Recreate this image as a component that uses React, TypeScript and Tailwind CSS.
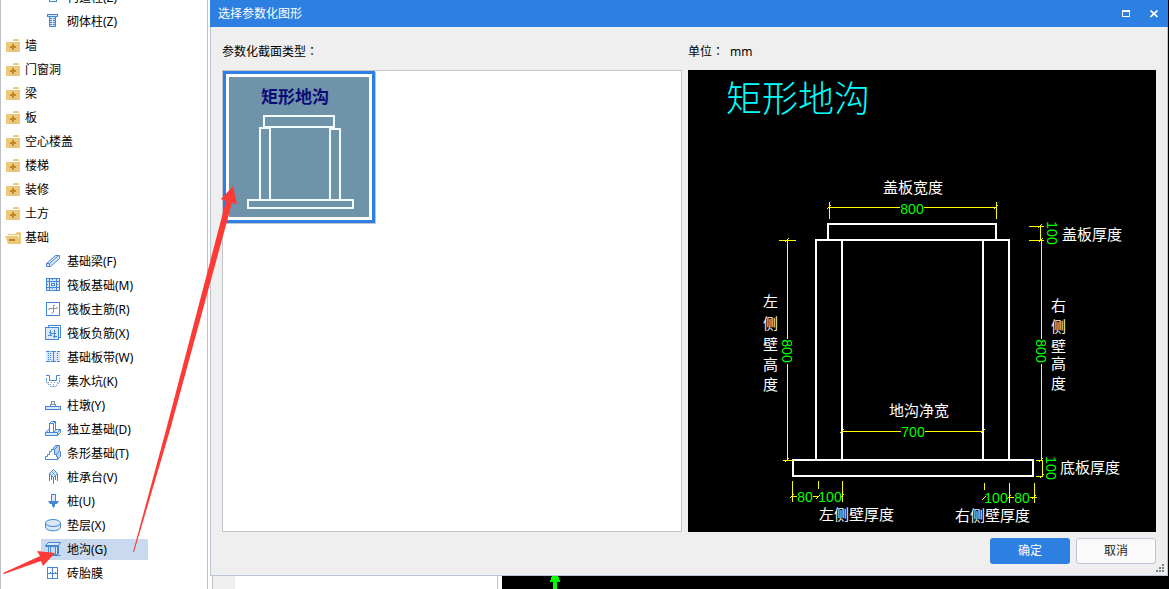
import React, { useState } from "react";

const BLUE = "#4187d6";
const PALE = "#d9e7f7";

const folders = ["墙", "门窗洞", "梁", "板", "空心楼盖", "楼梯", "装修", "土方"];

const columnItems = [
  { id: "gzz", name: "构造柱(Z)" },
  { id: "qtz", name: "砌体柱(Z)" },
];

const foundationItems = [
  { id: "beam", name: "基础梁(F)" },
  { id: "raft", name: "筏板基础(M)" },
  { id: "raftMain", name: "筏板主筋(R)" },
  { id: "raftNeg", name: "筏板负筋(X)" },
  { id: "strip", name: "基础板带(W)" },
  { id: "pit", name: "集水坑(K)" },
  { id: "pier", name: "柱墩(Y)" },
  { id: "isolated", name: "独立基础(D)" },
  { id: "stripBase", name: "条形基础(T)" },
  { id: "pileCap", name: "桩承台(V)" },
  { id: "pile", name: "桩(U)" },
  { id: "cushion", name: "垫层(X)" },
  { id: "trench", name: "地沟(G)" },
  { id: "brick", name: "砖胎膜" },
];

const icons: Record<string, React.ReactNode> = {
  gzz: <path d="M2.5 4.5h2v-2h7v2h2v6h-2v2h-7v-2h-2z" fill="white" />,
  qtz: (
    <>
      <path d="M2.5 1.5h10v2h-10z" fill={PALE} />
      <path d="M4.5 3.5h6v10h-6z" fill={PALE} />
      <path d="M5 5.5h5M5 7.5h5M5 9.5h5M5 11.5h5" strokeDasharray="2 1" />
    </>
  ),
  beam: (
    <g shapeRendering="auto">
      <path d="M1.5 10.5l9-8h4v3l-9 8h-4z" fill={PALE} />
      <path d="M1.5 10.5h3v3M4.5 10.5l9-8" />
    </g>
  ),
  raft: (
    <>
      <path d="M1.5 1.5h13v12h-13z" fill={PALE} />
      <path d="M4.5 2v12M11.5 2v12M2 4.5h12M2 10.5h12" />
      <path d="M6.5 6.5h3v2h-3z" fill="white" />
      <path d="M7.5 2v2M7.5 11v3M2 7.5h2M12 7.5h2" strokeDasharray="1 1" />
    </>
  ),
  raftMain: (
    <>
      <path d="M1.5 1.5h13v13h-13z" fill="white" />
      <g stroke="#8a949e" shapeRendering="auto">
        <path d="M4 9V7.5h8V6" />
        <path d="M10 4.5H8.5V11q0 1-2 1" />
      </g>
    </>
  ),
  raftNeg: (
    <>
      <path d="M3.5 2.5v-2h12v12h-2" />
      <path d="M.5 2.5h13v12h-13z" fill={PALE} />
      <path d="M3 10.5h4M5.5 5v6M4 7.5h2M6 8.5h5M9.5 5v8M8 11.5h4" />
    </>
  ),
  strip: (
    <>
      <path d="M1 2h14v11H1z" fill={PALE} stroke="none" />
      <path d="M1 2.5h4M6 2.5h5M12 2.5h3M1 12.5h4M6 12.5h5M12 12.5h3M8.5 3v10" />
      <path d="M3.5 4v8M12.5 4v8M5.5 4v8" strokeDasharray="1 1" />
    </>
  ),
  pit: (
    <g shapeRendering="auto">
      <path d="M1 2.5h3.5v5h7v-5H15" />
      <path d="M1.5 5v4l4 4.5h5l4-4.5V5" strokeDasharray="2 1" />
      <path d="M3 9.5h10M5 11.5h6" stroke="#8e99a5" strokeDasharray="1 2" />
    </g>
  ),
  pier: (
    <>
      <path d="M.5 9.5h15v3H.5z" fill={PALE} />
      <path d="M5.5 9V7.5h5V9M6.5 7V4.5h3V7" stroke="#7e8c9b" />
    </>
  ),
  isolated: (
    <g shapeRendering="auto">
      <path d="M.5 11.5l3-3h12v3l-3 3H.5z" fill={PALE} />
      <path d="M4.5 11.5v-9l2-2h4v9l-2 2z" fill="white" />
      <path d="M8.5 2.5v9M4.5 2.5h4l2-2M.5 11.5h12l3-3M12.5 11.5v3" />
    </g>
  ),
  stripBase: (
    <g shapeRendering="auto">
      <path d="M7.5 4.5l3-4h4v5l1 1v5l-3 3z" fill="#bdd5f0" />
      <path d="M.5 14.5v-3h2v-2h2v-3h2v-2h3v5h2v2h1v3z" fill="white" />
      <path d="M9.5 4.5l4-4M11.5 9.5l3-4" />
    </g>
  ),
  pileCap: (
    <g shapeRendering="auto">
      <path d="M8.5.5l4 4-4 4-4-4z" fill={PALE} />
      <path d="M8.5 8v7M4.5 4.5V12M12.5 4.5V12M6.5 7v4M10.5 7v4" />
      <path d="M6.5 2.5l4 4M10.5 2.5l-4 4" strokeOpacity="0.5" />
    </g>
  ),
  pile: (
    <g shapeRendering="auto">
      <path d="M6.5 1.5h4v7h-4z" fill={PALE} />
      <path d="M3 8h3v1h5V8h3l-2 3H5zM7 11h3v2l-1.5 2L7 13z" fill={BLUE} stroke="none" />
      <path d="M6 1.5h5M6.5 3v6M10.5 3v6" />
    </g>
  ),
  cushion: (
    <g shapeRendering="auto">
      <path d="M.5 6v4c0 5 15 5 15 0V6" fill={PALE} />
      <ellipse cx="8" cy="6" rx="7.5" ry="3.5" fill={PALE} />
    </g>
  ),
  trench: (
    <g shapeRendering="auto">
      <path d="M.5 4.5l3-3h12l-2 3v1H.5z" fill={PALE} />
      <path d="M3.5 5.5h2v8h-2zM10.5 5.5h2v8h-2z" fill={PALE} />
      <path d="M1 4.5h12.5M5.5 13.5h5M2 14.5h13.5M13.5 5v8" />
    </g>
  ),
  brick: (
    <>
      <path d="M2.5 2.5h10v11h-10z" fill="white" />
      <path d="M7.5 2v12M2 8.5h11M5.5 7v1M10.5 7v1" />
    </>
  ),
};

function ClosedFolder() {
  return (
    <svg className="h-4 w-4 shrink-0" viewBox="0 0 16 16" aria-hidden="true">
      <path d="M9 1h4l1 1v1H8V2z" fill="#edc77c" />
      <path d="M1 4h14v10H1z" fill="#edc77c" />
      <path d="M8 6v6M5 9h6" stroke="#c08a2c" strokeWidth="2" />
    </svg>
  );
}

function OpenFolder() {
  return (
    <svg className="h-4 w-4 shrink-0" viewBox="0 0 16 16" aria-hidden="true">
      <path d="M2 4h8l2-2h3l1 1v11h-2z" fill="#edc77c" />
      <path d="M4 5h10v3H4z" fill="#fff6de" />
      <path d="M0 6h13l2 8H3z" fill="#edc77c" />
      <path d="M4 10h6" stroke="#b98428" strokeWidth="2" />
    </svg>
  );
}

interface TreeItemProps {
  id: string;
  name: string;
  selected: boolean;
  onSelect: (id: string) => void;
}

const TreeItem: React.FC<TreeItemProps> = ({ id, name, selected, onSelect }) => (
  <li className="flex h-6 shrink-0 items-start pt-px pl-10">
    <button
      type="button"
      onClick={() => onSelect(id)}
      className={`flex h-[21px] w-[107px] items-start gap-1.5 pt-0.5 pl-1 text-left leading-[18px] whitespace-nowrap ${
        selected ? "bg-[#c9d9ef]" : ""
      }`}
    >
      <svg
        className="h-4 w-4 shrink-0"
        viewBox="0 0 16 16"
        fill="none"
        stroke={BLUE}
        shapeRendering="crispEdges"
        aria-hidden="true"
      >
        {icons[id]}
      </svg>
      {name}
    </button>
  </li>
);

const FolderRow = ({ name, open = false }: { name: string; open?: boolean }) => (
  <li className="flex h-6 shrink-0 items-center pl-1">
    <button type="button" className="flex items-center gap-1 whitespace-nowrap">
      {open ? <OpenFolder /> : <ClosedFolder />}
      {name}
    </button>
  </li>
);

/* full-width colon, centred in its cell */
const Colon = () => <span className="font-['Noto_Sans_CJK_TC',sans-serif] leading-none">：</span>;

/* small picture of the section in the type list */
function SectionThumb() {
  return (
    <svg className="block h-[140px] w-[140px] bg-[#6f93a9]" viewBox="0 0 140 140">
      <text x="32" y="26" fontSize="17" fontWeight="700" fill="#0b0b78">
        矩形地沟
      </text>
      <g fill="none" stroke="#f2fcff" strokeWidth="2" shapeRendering="crispEdges">
        <path d="M35 39h70v11H35z" />
        <path d="M31 51h10v72H31zM101 52h10v71h-10z" />
        <path d="M19 123h105v8H19z" />
      </g>
    </svg>
  );
}

const labels = [
  { x: 195, y: 123, text: "盖板宽度" },
  { x: 374, y: 170, text: "盖板厚度" },
  { x: 372, y: 403, text: "底板厚度" },
  { x: 201, y: 346, text: "地沟净宽" },
  { x: 131, y: 450, text: "左侧壁厚度" },
  { x: 267, y: 451, text: "右侧壁厚度" },
];

const uprightLabels = [
  { x: 75, ys: [237, 259, 280, 300, 320], text: "左侧壁高度" },
  { x: 363, ys: [241, 262, 282, 299, 319], text: "右侧壁高度" },
];

const dims = [
  { x: 224, y: 144, text: "800" },
  { x: 225, y: 367, text: "700" },
  { x: 117, y: 432, text: "80" },
  { x: 142, y: 432, text: "100" },
  { x: 308, y: 433, text: "100" },
  { x: 334, y: 433, text: "80" },
];

const turnedDims = [
  { x: 94, y: 281, text: "800" },
  { x: 348, y: 281, text: "800" },
  { x: 359, y: 163, text: "100" },
  { x: 358, y: 398, text: "100" },
];

/* arrow ticks at the ends of the dimension lines */
const ticks = [
  [141, 137], [308, 137], [99, 170], [99, 390], [154, 361], [295, 361],
  [352, 156], [353, 170], [353, 390], [354, 406], [104, 426], [130, 427],
  [154, 426], [296, 428], [321, 427], [346, 427],
];

function SectionPreview() {
  return (
    <svg className="block h-full w-full" viewBox="0 0 468 462" role="img" aria-label="矩形地沟">
      <text x="38" y="42" fontSize="36" fontWeight="300" fill="#00ffff">
        矩形地沟
      </text>
      <g fill="none" stroke="white" strokeWidth="2" shapeRendering="crispEdges">
        <path d="M140 154h168v16H140z" />
        <path d="M128 390V170h193v220M154 170v220M295 170v220" />
        <path d="M105 390h240v16H105z" />
      </g>
      <g fill="none" stroke="#ffff00" shapeRendering="crispEdges">
        <path d="M141.5 132v17M308.5 132v17M141 137.5h71M236 137.5h72" />
        <path d="M341 156.5h15M341 170.5h15M352.5 156v14" />
        <path d="M353.5 170v99M353.5 294v96" />
        <path d="M91 170.5h17M95 390.5h10M99.5 170v99M99.5 294v96" />
        <path d="M154 361.5h59M237 361.5h58" />
        <path d="M104.5 411v21M130.5 411v8M154.5 411v21M104 426.5h5M125 426.5h5" />
        <path d="M296.5 413v7M321.5 413v20M346.5 413v20M321 427.5h5M342 427.5h7" />
        <path d="M348 390.5h7M348 406.5h7M354.5 390v16" />
        {ticks.map(([x, y]) => (
          <path key={`${x}-${y}`} d={`M${x - 2} ${y + 2}l4-4`} />
        ))}
      </g>
      <g fill="white" fontSize="15">
        {labels.map((label) => (
          <text key={label.text} x={label.x} y={label.y}>
            {label.text}
          </text>
        ))}
        {uprightLabels.map((label) =>
          label.ys.map((y, i) => (
            <text key={label.text + y} x={label.x} y={y}>
              {label.text[i]}
            </text>
          ))
        )}
      </g>
      <g
        fill="#00ff00"
        fontSize="14"
        textAnchor="middle"
        className="font-['Liberation_Sans',sans-serif]"
      >
        {dims.map((dim) => (
          <text key={`${dim.x}`} x={dim.x} y={dim.y}>
            {dim.text}
          </text>
        ))}
        {turnedDims.map((dim) => (
          <text key={`${dim.x}`} transform={`translate(${dim.x} ${dim.y}) rotate(90)`}>
            {dim.text}
          </text>
        ))}
      </g>
    </svg>
  );
}

function Dialog() {
  return (
    <section className="flex min-h-0 flex-1 flex-col border-b border-[#bcc5d3] bg-[#efefef]">
      <header className="flex h-[27px] shrink-0 items-center justify-between bg-[#2d7fe1] pr-2 pl-2 text-white">
        <h1>选择参数化图形</h1>
        <div className="flex items-center gap-4">
          <button type="button" aria-label="最大化" className="p-0.5">
            <svg className="block h-2 w-2" viewBox="0 0 8 8" shapeRendering="crispEdges">
              <path d="M0 0h8v7H0zM1 2v4h6V2z" fill="white" fillRule="evenodd" />
            </svg>
          </button>
          <button type="button" aria-label="关闭" className="p-0.5">
            <svg className="block h-2 w-2" viewBox="0 0 8 8">
              <path d="M.5.5l7 6.5M7.5.5L.5 7" stroke="white" strokeWidth="1.7" />
            </svg>
          </button>
        </div>
      </header>

      <div className="flex min-h-0 flex-1 flex-col border-x border-[#bcc5d3] px-[11px] pb-[11px]">
        <div className="grid min-h-0 flex-1 grid-cols-[460fr_468fr] grid-rows-[auto_1fr] gap-x-1.5">
          <h2 className="pt-4 pb-[9px] leading-[18px]">
            参数化截面类型
            <Colon />
          </h2>
          <p className="flex gap-1.5 pt-4 pb-[9px] leading-[18px]">
            <span>
              单位
              <Colon />
            </span>
            <span>mm</span>
          </p>
          <div className="min-h-0 border border-[#c3c5c9] bg-white">
            <button
              type="button"
              aria-label="矩形地沟"
              className="border-3 border-[#2d7fe1] bg-white p-[3px] shadow-[1px_1px_0_#c3c5c9]"
            >
              <SectionThumb />
            </button>
          </div>
          <div className="min-h-0 bg-black">
            <SectionPreview />
          </div>
        </div>

        <footer className="flex justify-end gap-1.5 pt-1.5">
          <button type="button" className="h-[26px] w-20 rounded-[3px] bg-[#2d7fe1] text-white">
            确定
          </button>
          <button
            type="button"
            className="h-[26px] w-20 rounded-[3px] border border-[#bcc5d9] bg-[#fafafa] text-[#222]"
          >
            取消
          </button>
        </footer>
      </div>
    </section>
  );
}

export default function App() {
  const [selected, setSelected] = useState("trench");

  return (
    <div className="relative flex h-screen overflow-hidden bg-white font-['Noto_Sans','Noto_Sans_CJK_SC',sans-serif] text-xs text-black">
      <aside className="w-52 shrink-0 overflow-hidden border-x border-[#bfc1c9]">
        <ul className="flex h-full flex-col justify-end pb-[3px]">
          {columnItems.map((item) => (
            <TreeItem key={item.id} {...item} selected={selected === item.id} onSelect={setSelected} />
          ))}
          {folders.map((name) => (
            <FolderRow key={name} name={name} />
          ))}
          <FolderRow name="基础" open />
          {foundationItems.map((item) => (
            <TreeItem key={item.id} {...item} selected={selected === item.id} onSelect={setSelected} />
          ))}
        </ul>
      </aside>

      <main className="flex min-w-0 flex-1 flex-col border-r border-black pl-0.5">
        <Dialog />
        {/* Strip of the main window under the dialog */}
        <div className="flex h-[13px] shrink-0 pl-0.5">
          <div className="w-[23px] border-l border-[#bfc1c9] bg-[#efefef]" />
          <div className="w-[263px] border-r border-[#bfc1c9] bg-white" />
          <div className="ml-1 flex-1 bg-black pl-12">
            <svg className="block h-[13px] w-3" viewBox="0 0 12 13" shapeRendering="crispEdges">
              <path d="M2 0h6v1h1v3h1v2H7v7H3V6H0V4h1V1h1z" fill="#00ff00" />
            </svg>
          </div>
        </div>
      </main>

      {/* Resize grip */}
      <svg
        className="absolute right-[5px] bottom-[17px] h-2 w-2"
        viewBox="0 0 8 8"
        fill="#7b7f88"
        shapeRendering="crispEdges"
      >
        <path d="M6 0h2v2H6zM3 3h2v2H3zM6 3h2v2H6zM0 6h2v2H0zM3 6h2v2H3zM6 6h2v2H6z" />
      </svg>

      {/* Red pointer arrows */}
      <svg
        className="pointer-events-none absolute top-0 left-0 h-[589px] w-60"
        viewBox="0 0 240 589"
        fill="#fc3a36"
      >
        <path d="M3 573L40 556 37 551 55 553 43 566 41 561 4 574z" />
        <path d="M133 552L166 430 226 201 221 199 233 186 237 204 232 203 170 430 134 552z" />
      </svg>
    </div>
  );
}
